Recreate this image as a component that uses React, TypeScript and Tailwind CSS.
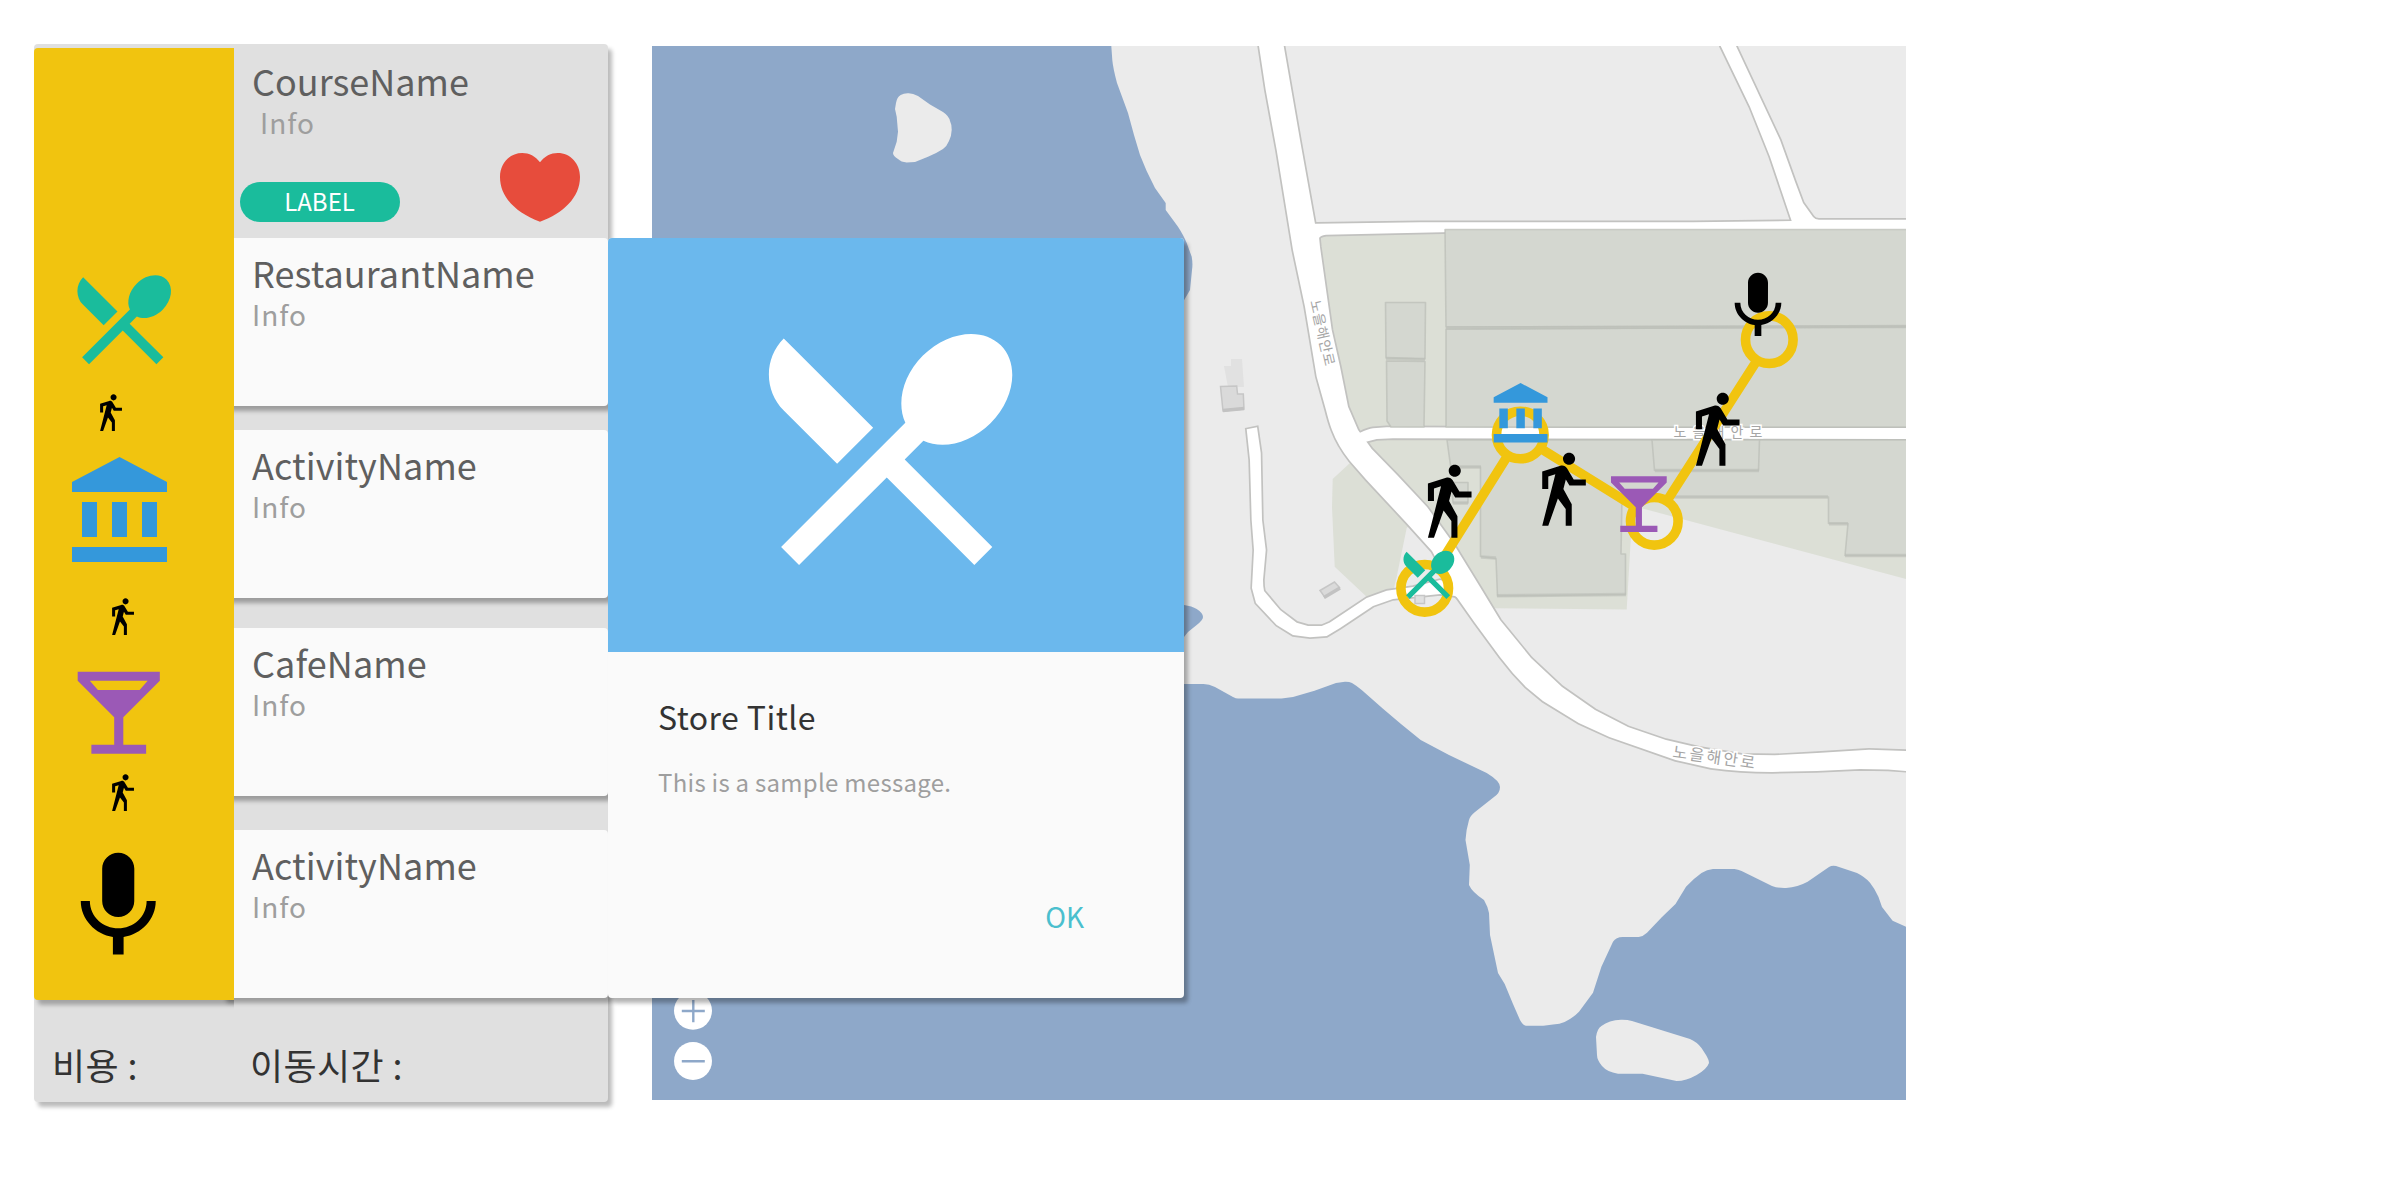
import type { ReactNode } from "react";

const PATHS = {
  dining:
    "M8.1 13.34l2.83-2.83L3.91 3.5c-1.56 1.56-1.56 4.09 0 5.66l4.19 4.18zm6.78-1.81c1.53.71 3.68.21 5.27-1.38 1.91-1.91 2.28-4.65.81-6.12-1.46-1.46-4.2-1.1-6.12.81-1.59 1.59-2.09 3.74-1.38 5.27L3.7 19.87l1.41 1.41L12 14.41l6.88 6.88 1.41-1.41L13.41 13l1.47-1.47z",
  walk:
    "M14.12 10H19V8.2H15.38L13.38 4.87C13.08 4.37 12.54 4.03 11.92 4.03C11.74 4.03 11.58 4.06 11.42 4.11L6 5.8V11H7.8V7.33L9.91 6.67L6 22H7.8L10.67 13.89L13 17V22H14.8V15.59L12.31 11.05L13.04 8.18M14 3.8C15 3.8 15.8 3 15.8 2C15.8 1 15 .2 14 .2C13 .2 12.2 1 12.2 2C12.2 3 13 3.8 14 3.8Z",
  bank: "M11.5 1L2 6V8H21V6M16 10V17H19V10M2 22H21V19H2M10 10V17H13V10M4 10V17H7V10H4Z",
  bar: "M21 5V3H3v2l8 8v6H6v2h12v-2h-5v-6l8-8zM7.43 7L5.66 5h12.69l-1.78 2H7.43z",
  mic: "M12 14c1.66 0 2.99-1.34 2.99-3L15 5c0-1.66-1.34-3-3-3S9 3.34 9 5v6c0 1.66 1.34 3 3 3zm5.3-3c0 3-2.54 5.1-5.3 5.1S6.7 14 6.7 11H5c0 3.41 2.72 6.23 6 6.72V21h2v-3.28c3.28-.48 6-3.3 6-6.72h-1.7z",
};

type IconName = keyof typeof PATHS;

function Icon({ name, className }: { name: IconName; className: string }) {
  return (
    <svg viewBox="0 0 24 24" fill="currentColor" className={`block shrink-0 ${className}`}>
      <path d={PATHS[name]} />
    </svg>
  );
}

function Marker({ name, x, y, size, fill }: { name: IconName; x: number; y: number; size: number; fill: string }) {
  return <path d={PATHS[name]} fill={fill} transform={`translate(${x} ${y}) scale(${size / 24})`} />;
}

const LAND =
  "M1111.3 46L1112.3 60Q1113 68 1117 83L1128 113L1134 135L1140 155Q1146 171 1155 188L1165.7 203V210L1178 226.7Q1184 236 1186.7 243L1191.7 256.7Q1193 264 1192 270L1190 290L1183 302L1176 310V603L1184 605Q1192 606 1196.7 609Q1203 613 1203 617Q1203 620 1196.7 625L1188 632L1184 637L1176 650V684H1203.6Q1209 684 1215 687L1233 697Q1236 698.5 1238 698.5H1281.5L1293 697L1314.5 690.7L1336 683L1345 681.7Q1349 681.5 1352 683Q1357 686 1361.7 690L1383 708.7L1401 724L1420.7 740L1449 755L1486.7 773Q1500 781 1500 787Q1500 793 1494 797L1475 812Q1470 816 1469 820Q1466 830 1465.5 840L1469.8 865L1469 885Q1472 892 1484 900Q1488 907 1489 913L1490 935L1498 973L1504.7 984L1513 1004L1520 1020Q1523 1025.7 1526 1025.7H1543.4L1553 1024.5Q1560 1024 1564.6 1022Q1573 1018 1579 1011.7L1593 992.7L1601.4 966.7L1613 941.7Q1616 937 1622.7 937H1638.7Q1643 936.5 1647 932.7L1662 917L1675.5 904L1686 886.7Q1693 879 1701.5 873Q1707 869.5 1713 869H1734.5Q1738 869.5 1741.6 871L1772 886Q1778 888.3 1786 888Q1798 887 1807.6 881.7L1829 867Q1832 865 1836 866L1857 873Q1865 877 1870 882.7Q1875 889 1878.4 896.7L1882 907L1892.6 920.7L1906 926.7V46Z";

const ISLANDS = [
  "M896 103Q897 97 900.7 95Q904 93 908.7 93.3Q913 93.5 918 96L930 104.5L943 112Q949 116 950 121Q952 125 951.7 130Q951.5 136 949 141Q947 146 943 149Q937 153 928 156.7L915 162L906.7 162.5Q901 162 898 159Q893 156 893 153L896.7 141.7L898 131.7L896.7 116.7L895 109Z",
  "M1596 1037Q1597 1029 1601.4 1026Q1609 1020 1621 1019.7Q1627 1019.5 1632 1021L1690 1039Q1697 1042 1701.5 1048L1706 1055Q1709 1060 1709 1063Q1707 1069 1696.7 1075Q1686 1081 1676.5 1081L1642.5 1073.7H1618Q1607 1072 1602 1066Q1597 1060 1597 1055Z",
];

const GREENS = [
  "M1310 232H1906V430H1350Z",
  "M1350 463L1332.7 479L1332 507L1334.7 566.7L1368 598L1393 592L1396.7 576.7L1406.7 528L1420 515L1390 480Z",
  "M1355 439H1906V579L1641.7 508.3L1630.7 540L1626.7 609.5L1494 608.3L1440 530Z",
];

const ROADS = [
  "M1259 46L1265.7 90L1276.7 150L1293 250L1305 306.7L1316.7 376.7L1326 410Q1329 422 1332 430Q1338 446 1350 461L1366.7 480L1406.7 523L1432 551L1456.7 597L1475 623L1500 657Q1512 673 1526 687L1543 701L1578.8 723L1609.4 737L1675.5 760L1711 768Q1740 772 1772 772L1817 771L1860 769L1888 769.5L1920 772V752L1906 751L1869 749.7L1817 753L1774.6 755.3L1741.6 754.7L1699 747.7L1666 740L1628 727L1595 710L1562 687L1531 658L1500 620L1480 587L1453 543L1427 507L1397 475L1371.7 449L1358 430L1348 406.7L1340 366.7L1331.7 330L1320 247L1319 237L1315 224L1300 140L1283.7 46V30H1256Z",
  "M1300 224L1420 222.3H1693L1791.7 221L1770 156.7L1750 106.7L1720.7 46V30H1728L1736 46L1780 140L1795 181.7L1803 203L1813 217Q1815 219.7 1819 219.7H1920V231H1500L1326 234.7Q1320 235.5 1319 238L1305 240Z",
  "M1346 438L1360 432.7Q1368 429 1373 428.3L1386.7 427.3L1580 428L1920 428V439L1393 438.3L1376.7 439L1365 442L1355 450Z",
  "M1246.7 429.3L1257 427.3L1260.7 453L1262 520L1265.7 550L1263 580Q1263 587 1264 591L1280 610L1296.7 622.7L1308 626H1321.7L1330 622.5L1366.7 598L1386.7 590.7L1413 587L1440 580L1455 585L1465 602L1455 596L1440 594L1393 599L1373 606L1340 628L1326.7 636L1310 637.3L1293 635L1276.7 625L1256 603L1252 588L1254 550L1251.7 520L1250 460Z",
];

const BUILDINGS = [
  "M1385.5 302.5H1425.5L1425 359L1386 358Z",
  "M1386.5 361L1425 361.5L1424 427H1391L1387 421Z",
  "M1445 229.5H1910V326L1446 327Z",
  "M1446 329L1910 327V427H1446Z",
  "M1447 440L1450.7 467H1480.5V556.5L1496 558.5L1497.5 596L1625.5 594.5V554H1621L1622 497H1828.5V523.5H1848L1845 555.5H1910V440Z",
  "M1451.7 482.5H1468V503H1453Z",
  "M1652 440L1654.5 470.5H1758.5L1759.5 440Z",
];

const RING_CENTERS = [
  [1424.7, 588.3],
  [1520.3, 435],
  [1654.3, 521.3],
  [1769.3, 339.7],
];

function RouteMap() {
  return (
    <svg viewBox="652 46 1254 1054" className="block h-[1054px] w-[1254px] shrink-0 overflow-hidden">
      <rect x="652" y="46" width="1254" height="1054" fill="#8ea8c9" />
      <path d={LAND} fill="#ebebeb" />
      {ISLANDS.map((d) => (
        <path key={d} d={d} fill="#ebebeb" />
      ))}
      {GREENS.map((d) => (
        <path key={d} d={d} fill="#dcdfd6" />
      ))}
      {ROADS.map((d) => (
        <path key={d} d={d} fill="none" stroke="#c2c2c0" strokeWidth="3.4" />
      ))}
      {ROADS.map((d) => (
        <path key={d} d={d} fill="#fff" />
      ))}

      <g stroke="#bbbeb7" strokeOpacity="0.7" strokeWidth="1.6" strokeLinejoin="round">
        {BUILDINGS.map((d) => (
          <path key={d} d={d} fill="#d4d7d0" />
        ))}
      </g>
      <g stroke="#bbbeb7" strokeWidth="3.4" strokeOpacity="0.6" fill="none">
        <path d="M1386 358.5L1425 359.5M1446 328L1906 326.5M1497 595.7L1626 594.5M1655 470.5H1759M1845 555.5H1906M1829 523.7H1848M1481 557L1496 558M1453 503H1468M1451 467H1481M1622 497H1828" />
      </g>
      <path d="M1231 359H1242L1244 387H1228L1224 366H1231Z" fill="#e1e1e1" />
      <g fill="#dadada" stroke="#c6c6c6" strokeWidth="1.5">
        <path d="M1220.5 386.5L1236.7 386L1237.5 394H1243.3L1244 409L1223 411Z" />
        <path d="M1320 590.5L1334.5 582L1339.5 587.5L1325 597.5Z" />
        <path d="M1415 595.5H1424.5V603.5H1415Z" fill="#e0e0e0" />
      </g>
      <path d="M1223 410.5L1244 408.5M1324 597.5L1340 588" stroke="#c2c2c2" strokeWidth="3.5" />

      <g
        fill="#a5a5a5"
        stroke="#fff"
        strokeWidth="3"
        paintOrder="stroke"
        textAnchor="middle"
        className="font-['Noto_Sans_CJK_KR',sans-serif]"
      >
        <text transform="translate(1317.5 334) rotate(77)" fontSize="14" textLength="67">
          노을해안로
        </text>
        <text transform="translate(1718 437)" fontSize="14" textLength="89">
          노을해안로
        </text>
        <text transform="translate(1713 763) rotate(8)" fontSize="16" textLength="83">
          노을해안로
        </text>
      </g>

      <g stroke="#f1c40f" strokeWidth="9.6" fill="none">
        <path d="M1438.5 566L1506.5 457.5M1541.5 449L1633.5 506M1667.5 500L1756 362" />
        {RING_CENTERS.map(([cx, cy]) => (
          <circle key={cx} cx={cx} cy={cy} r="23.8" />
        ))}
      </g>
      <Marker name="dining" x={1396.2} y={542.4} size={63.8} fill="#1abc9c" />
      <Marker name="bank" x={1488} y={380.2} size={68} fill="#3498db" />
      <Marker name="bar" x={1601.7} y={467} size={74.3} fill="#9b59b6" />
      <Marker name="mic" x={1718} y={266} size={80} fill="#000" />
      <Marker name="walk" x={1407.8} y={464} size={80.5} fill="#000" />
      <Marker name="walk" x={1522.1} y={452} size={80.5} fill="#000" />
      <Marker name="walk" x={1675.8} y={392} size={80.5} fill="#000" />

      <circle cx="693" cy="1010.7" r="19" fill="#fff" />
      <circle cx="693" cy="1061" r="19" fill="#fff" />
      <path d="M681.8 1011H704.8M693.3 1000V1022.3M681.8 1061.3H704.8" stroke="#8ea8c9" strokeWidth="2.4" />
    </svg>
  );
}

function StoreDialog() {
  return (
    <div className="absolute left-full top-0 z-30 flex h-[760px] w-[576px] flex-col rounded bg-[#fafafa] shadow-[4px_5px_4px_rgba(0,0,0,0.3)]">
      <div className="h-[414px] shrink-0 rounded-t bg-[#6bb8ed] pl-[126.4px] pt-[56.1px] text-white">
        <Icon name="dining" className="size-[305.5px]" />
      </div>
      <h2 className="mt-[40px] pl-[50px] text-[32px] leading-[48px] tracking-[0.45px] text-[#333]">Store Title</h2>
      <p className="mt-[24px] pl-[50px] text-[24px] leading-[36px] tracking-[0.28px] text-[#9e9e9e]">
        This is a sample message.
      </p>
      <button className="mr-[100px] mt-[96px] self-end text-[28px] leading-[40px] text-[#4abfce]">OK</button>
    </div>
  );
}

function PlaceCard({ title, className, children }: { title: string; className: string; children?: ReactNode }) {
  return (
    <div
      className={`relative -ml-3 h-[168px] shrink-0 rounded bg-[#fafafa] pl-[30px] pt-[10px] shadow-[4px_5px_4px_rgba(0,0,0,0.3)] ${className}`}
    >
      <h3 className="text-[36px] leading-[48px] tracking-[0.08px] text-[#5f5f5f]">{title}</h3>
      <p className="-mt-[2px] text-[28px] leading-[40px] tracking-[1px] text-[#9e9e9e]">Info</p>
      {children}
    </div>
  );
}

export default function App() {
  return (
    <div className="flex h-[1200px] w-[2400px] items-start overflow-hidden bg-white pl-[34px] pt-[44px] font-['Noto_Sans_CJK_KR','Noto_Sans',sans-serif]">
      <aside className="relative z-10 flex h-[1058px] w-[574px] shrink-0 flex-col rounded bg-[#e0e0e0] shadow-[4px_5px_4px_rgba(0,0,0,0.27)]">
        <div className="flex">
          <nav className="z-10 mt-1 flex h-[952px] w-[200px] shrink-0 flex-col rounded-l bg-[#f1c40f] text-black shadow-[4px_5px_4px_rgba(0,0,0,0.27)] [clip-path:inset(0_0_-12px_0)]">
            <Icon name="dining" className="ml-[30.3px] mt-[212.2px] size-[117.5px] text-[#1abc9c]" />
            <Icon name="walk" className="ml-[55.9px] mt-[16px] size-[40.4px]" />
            <Icon name="bank" className="ml-[27.8px] mt-[18.1px] size-[120px] text-[#3498db]" />
            <Icon name="walk" className="ml-[67.7px] mt-[25.5px] size-[40.4px]" />
            <Icon name="bar" className="ml-[30.3px] mt-[20.2px] size-[109.5px] text-[#9b59b6]" />
            <Icon name="walk" className="ml-[67.7px] mt-[5.9px] size-[40.4px]" />
            <Icon name="mic" className="ml-[19.7px] mt-[27.5px] size-[128.5px]" />
          </nav>
          <section className="flex flex-1 flex-col">
            <header className="flex h-[194px] shrink-0 flex-col pt-[12px]">
              <h1 className="pl-[18px] text-[36px] leading-[48px] text-[#5f5f5f]">CourseName</h1>
              <p className="-mt-[2px] pl-[26px] text-[28px] leading-[40px] tracking-[1px] text-[#9e9e9e]">Info</p>
              <div className="mt-[11px] flex justify-between pl-[6px] pr-[28px]">
                <span className="mt-[29px] flex h-10 w-[160px] items-center justify-center rounded-full bg-[#1abc9c] pb-[2px] pr-[1px] text-[24px] leading-none text-white">
                  LABEL
                </span>
                <svg viewBox="0 0 80 69" className="h-[69px] w-[80px]" fill="#e74c3c">
                  <path d="M40 9.3C35.5 3.2 29 0 22.3 0C9.5 0 0 10.5 0 24C0 44.5 16.5 60 40 68.8C63.5 60 80 44.5 80 24C80 10.5 70.5 0 57.7 0C51 0 44.5 3.2 40 9.3Z" />
                </svg>
              </div>
            </header>
            <PlaceCard title="RestaurantName" className="">
              <StoreDialog />
            </PlaceCard>
            <PlaceCard title="ActivityName" className="mt-6" />
            <PlaceCard title="CafeName" className="mt-[30px]" />
            <PlaceCard title="ActivityName" className="mt-[34px]" />
          </section>
        </div>
        <footer className="flex pt-[40px] text-[36px] leading-[48px] tracking-[0.4px] text-[#333]">
          <span className="w-[198px] pl-[18px]">비용 :</span>
          <span className="pl-[18px]">이동시간 :</span>
        </footer>
      </aside>
      <main className="ml-[44px] mt-[2px]">
        <RouteMap />
      </main>
    </div>
  );
}
